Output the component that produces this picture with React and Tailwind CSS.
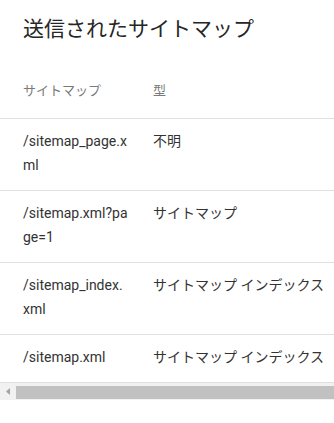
const rows = [
  { path: '/sitemap_page.xml', type: '不明' },
  { path: '/sitemap.xml?page=1', type: 'サイトマップ' },
  { path: '/sitemap_index.xml', type: 'サイトマップ インデックス' },
  { path: '/sitemap.xml', type: 'サイトマップ インデックス' },
]

const font = { fontFamily: 'Roboto, "Noto Sans CJK JP", sans-serif' }

export default function App() {
  return (
    <div className="w-[334px] h-[423px] bg-white overflow-hidden" style={font}>
      <div className="h-[64px] pt-[15px] pl-[23px]">
        <h1 className="text-[21px] leading-[28px] text-[#262626] font-normal whitespace-nowrap">
          送信されたサイトマップ
        </h1>
      </div>

      {/* header */}
      <div className="flex h-[55px] items-center border-b border-[#e0e0e0] text-[13px] text-[#7a7a7a]">
        <div className="w-[153px] shrink-0 pl-[23px]">サイトマップ</div>
        <div className="whitespace-nowrap">型</div>
      </div>

      {rows.map((row) => (
        <div
          key={row.path}
          className="flex pt-[10px] pb-[13px] border-b border-[#e0e0e0] text-[14px] leading-6 text-[#333333]"
        >
          <div className="w-[153px] shrink-0 pl-[23px] pr-[25px] break-all">{row.path}</div>
          <div className="whitespace-nowrap">{row.type}</div>
        </div>
      ))}

      {/* horizontal scrollbar */}
      <div className="flex h-[17px] bg-[#f1f1f1]">
        <div className="w-[16px] shrink-0 flex items-center justify-center">
          <svg width="4" height="7" viewBox="0 0 4 7">
            <path d="M4 0 L0 3.5 L4 7 Z" fill="#a3a3a3" />
          </svg>
        </div>
        <div className="flex-1 mt-[3px] mb-[1px] bg-[#c1c1c1]" />
      </div>
    </div>
  )
}
